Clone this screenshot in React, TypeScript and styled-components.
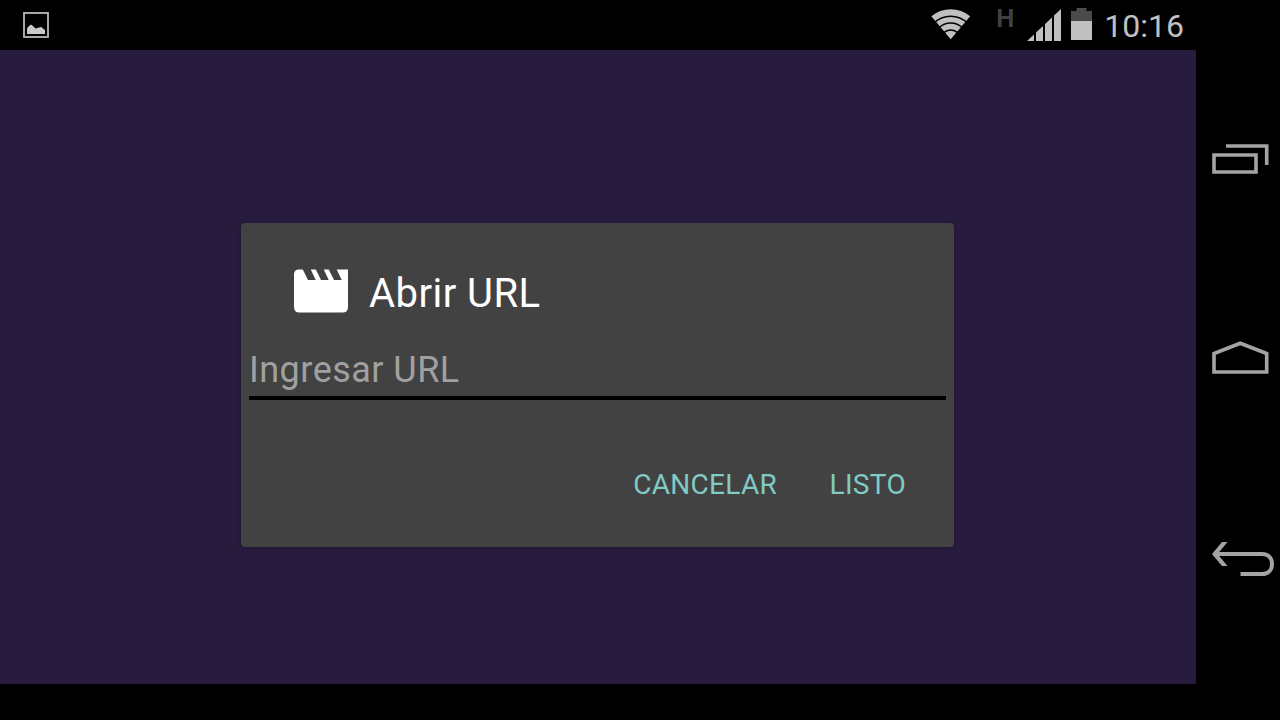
import { useState } from 'react';
import styled, { createGlobalStyle } from 'styled-components';

const GlobalStyle = createGlobalStyle`
  * {
    box-sizing: border-box;
  }

  body {
    margin: 0;
    background: #000;
    font-family: Roboto, 'Liberation Sans', sans-serif;
  }
`

function StatusBar() {
    return <StyledStatusBar>
        <svg width="26" height="26" viewBox="0 0 26 26">
            <rect x="1" y="1" width="24" height="24" fill="none" stroke="#b8b8b8" strokeWidth="1.8" />
            <path d="M4 22V16.5L6 14L8 12.5L10 14L12.5 16.5L16 15.5L18.5 15L20.5 17L22 18V22Z" fill="#c8c8c8" />
        </svg>
        <Indicators>
            <svg width="40" height="32" viewBox="0 0 40 32">
                <path d="M19.7 30.3L0.3 7.3A30 30 0 0 1 39.2 7.3Z" fill="#c0c0c0" />
                <g fill="none" stroke="#000" strokeWidth="1.4">
                    <circle cx="19.7" cy="31" r="23.8" />
                    <circle cx="19.7" cy="31" r="17" />
                    <circle cx="19.7" cy="31" r="10" />
                </g>
            </svg>
            <Network>H</Network>
            <svg width="34" height="32" viewBox="0 0 34 32">
                <path d="M0 32L7 25.4V32ZM9 32V23.5L16 16.9V32ZM18 32V15L25 8.5V32ZM27 32V6.6L34 0V32Z" fill="#c0c0c0" />
            </svg>
            <Battery>
                <svg width="21" height="32" viewBox="0 0 21 32">
                    <path d="M0 3H5.5V0H15.5V3H21V13H0Z" fill="#4b4b4b" />
                    <path d="M0 13H21V32H0Z" fill="#c0c0c0" />
                </svg>
            </Battery>
            <Clock>10:16</Clock>
        </Indicators>
    </StyledStatusBar>
}

const StyledStatusBar = styled.div`
  display: flex;
  align-items: center;
  justify-content: space-between;
  height: 50px;
  padding: 0 12px 0 23px;
`

const Indicators = styled.div`
  display: flex;
  align-items: center;
`

const Network = styled.div`
  width: 30px;
  margin: 0 7px 0 19px;
  padding-bottom: 14px;
  text-align: center;
  font-family: 'Liberation Sans', sans-serif;
  font-size: 25px;
  line-height: 25px;
  font-weight: bold;
  color: #404040;
`

const Battery = styled.div`
  display: flex;
  margin: 0 12px 2px 10px;
`

const Clock = styled.div`
  padding-top: 2px;
  font-size: 32px;
  line-height: 40px;
  color: #c0c0c0;
`

function NavigationBar() {
    return <StyledNavigationBar>
        <NavButton aria-label="Recientes">
            <svg width="84" height="60" viewBox="0 0 84 60" fill="none" stroke="#a4a4a4" strokeWidth="3.6">
                <path d="M18 25H60V42H18ZM30 16H70.7V35" />
            </svg>
        </NavButton>
        <NavButton aria-label="Inicio">
            <svg width="84" height="60" viewBox="0 0 84 60" fill="none" stroke="#a4a4a4" strokeWidth="3.6">
                <path d="M18 42V23.5L44.3 13.2L70.7 23.5V42Z" />
            </svg>
        </NavButton>
        <NavButton aria-label="Atrás">
            <svg width="84" height="60" viewBox="0 0 84 60" fill="none" stroke="#a4a4a4" strokeWidth="4">
                <path d="M19 24H66C72 24 76 28 76 34C76 40 72 44 66 44H44.5" />
                <path d="M26 12H31.5L21.5 24L31.5 36H26L16 24Z" fill="#a4a4a4" stroke="none" />
            </svg>
        </NavButton>
    </StyledNavigationBar>
}

const StyledNavigationBar = styled.div`
  display: flex;
  flex-direction: column;
  gap: 140px;
  width: 84px;
  padding-top: 130px;
`

const NavButton = styled.button`
  display: flex;
  padding: 0;
  border: none;
  background: none;
`

function UrlDialog() {
    const [url, setUrl] = useState('');

    return <Dialog>
        <Title>
            <svg width="54" height="44" viewBox="0 0 54 44">
                <path d="M5 0.5H8.8L14 11H21.7L16.8 0.5H21.8L27 11H34.7L29.8 0.5H34.8L40 11H47.7L42.7 0.5H54V38Q54 43.5 48.5 43.5H5.5Q0 43.5 0 38V5.5Q0 0.5 5 0.5Z" fill="#fff" />
            </svg>
            <TitleText>Abrir URL</TitleText>
        </Title>
        <UrlInput placeholder="Ingresar URL" value={url} onChange={(e) => setUrl(e.target.value)} />
        <Actions>
            <Action>CANCELAR</Action>
            <Action>LISTO</Action>
        </Actions>
    </Dialog>
}

const Dialog = styled.div`
  display: flex;
  flex-direction: column;
  width: 713px;
  height: 324px;
  margin: 173px 0 0 241px;
  padding: 46px 8px 0;
  border-radius: 4px;
  background-color: #424242;
  box-shadow: 0 1px 4px rgba(0, 0, 0, 0.25);
`

const Title = styled.div`
  display: flex;
  gap: 21px;
  height: 48px;
  padding-left: 45px;
`

const TitleText = styled.div`
  font-size: 40px;
  line-height: 50px;
  letter-spacing: 0.45px;
  color: #fff;
`

const UrlInput = styled.input`
  height: 52px;
  margin-top: 31px;
  padding: 0 0 4px;
  border: none;
  border-bottom: 4px solid #000;
  outline: none;
  background: none;
  font-family: inherit;
  font-size: 36px;
  letter-spacing: 0.47px;
  color: #fff;

  &::placeholder {
    color: #a0a0a0;
    opacity: 1;
  }
`

const Actions = styled.div`
  display: flex;
  justify-content: flex-end;
  gap: 52.5px;
  margin-top: 67px;
  padding-right: 40px;
`

const Action = styled.button`
  padding: 0;
  border: none;
  background: none;
  font-family: inherit;
  font-size: 28px;
  line-height: 36px;
  letter-spacing: 0.3px;
  color: #80cbc4;
`

function App() {
    return <Device>
        <GlobalStyle />
        <Screen>
            <StatusBar />
            <Content>
                <UrlDialog />
            </Content>
        </Screen>
        <NavigationBar />
    </Device>
}

const Device = styled.div`
  display: flex;
  width: 1280px;
  height: 720px;
  background-color: #000;
  overflow: hidden;
`

const Screen = styled.div`
  width: 1196px;
`

const Content = styled.div`
  display: flex;
  align-items: flex-start;
  height: 634px;
  background-color: #281c3e;
`

export default App;
